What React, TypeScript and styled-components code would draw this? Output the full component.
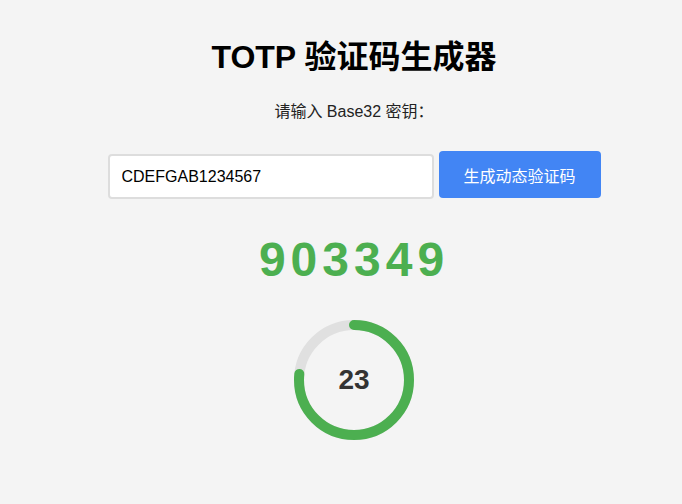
import React from "react";
import styled, { createGlobalStyle } from "styled-components";

const Global = createGlobalStyle`
  html, body { margin: 0; padding: 0; background: #f4f4f4; }
  body { font-family: "Liberation Sans", Arial, "Noto Sans CJK SC", sans-serif; color: #000; }
`;

const Page = styled.div`
  display: flex;
  flex-direction: column;
  align-items: center;
  padding: 37px 0 0 26px;
`;

const Title = styled.h1`
  margin: 0;
  font-size: 32px;
  line-height: 40px;
  font-weight: bold;
`;

const Label = styled.label`
  margin-top: 25px;
  font-size: 16px;
  line-height: 20px;
  color: #222;
`;

const Row = styled.div`
  margin-top: 29px;
  display: flex;
  align-items: flex-start;
  gap: 5px;
`;

const Input = styled.input`
  margin-top: 3px;
  box-sizing: border-box;
  width: 326px;
  height: 45px;
  padding: 0 12px;
  border: 2px solid #ddd;
  border-radius: 4px;
  background: #fff;
  font-family: inherit;
  font-size: 16px;
  color: #000;
  outline: none;
`;

const Button = styled.button`
  box-sizing: border-box;
  width: 162px;
  height: 47px;
  border: none;
  border-radius: 4px;
  background: #4285f4;
  color: #fff;
  font-family: inherit;
  font-size: 16px;
  cursor: pointer;
`;

const Code = styled.div`
  margin-top: 33px;
  font-size: 48px;
  line-height: 56px;
  font-weight: bold;
  color: #4caf50;
  letter-spacing: 5px;
`;

const Timer = styled.div`
  margin-top: 32px;
  position: relative;
  width: 120px;
  height: 120px;
`;

const Seconds = styled.div`
  position: absolute;
  inset: 0;
  display: flex;
  align-items: center;
  justify-content: center;
  font-size: 28px;
  font-weight: bold;
  color: #333;
`;

export default function App() {
  const remaining = 23;
  const r = 55;
  const c = 2 * Math.PI * r;
  const len = (remaining / 30) * c;
  return (
    <>
      <Global />
      <Page>
        <Title>TOTP 验证码生成器</Title>
        <Label>请输入 Base32 密钥：</Label>
        <Row>
          <Input defaultValue="CDEFGAB1234567" />
          <Button>生成动态验证码</Button>
        </Row>
        <Code>903349</Code>
        <Timer>
          <svg width="120" height="120" viewBox="0 0 120 120">
            <circle cx="60" cy="60" r={r} fill="none" stroke="#e0e0e0" strokeWidth="10" />
            <circle
              cx="60"
              cy="60"
              r={r}
              fill="none"
              stroke="#4caf50"
              strokeWidth="10"
              strokeLinecap="round"
              strokeDasharray={`${len} ${c}`}
              transform="rotate(-90 60 60)"
            />
          </svg>
          <Seconds>{remaining}</Seconds>
        </Timer>
      </Page>
    </>
  );
}
